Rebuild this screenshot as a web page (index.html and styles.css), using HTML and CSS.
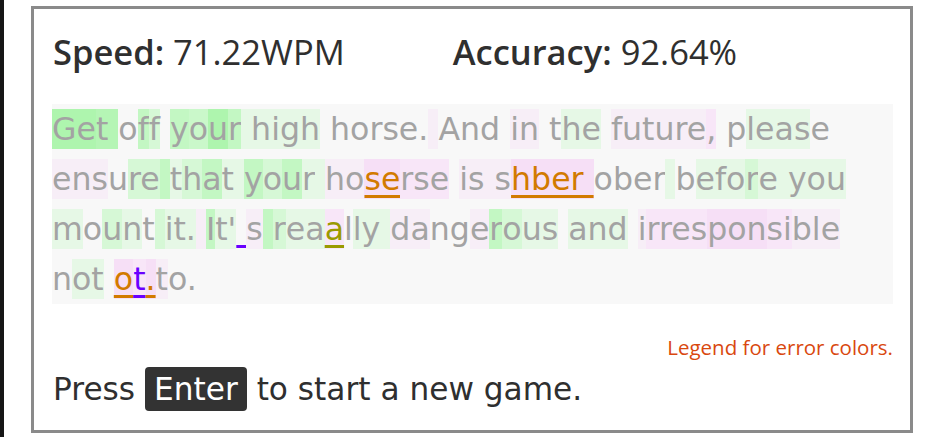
FILE: index.html
```html
<!DOCTYPE html>
<html lang="en">
<head>
<meta charset="utf-8">
<title>Typing results</title>
<link rel="stylesheet" href="styles.css">
</head>
<body>
<div class="strip"></div>
<main class="card">
  <div class="stats">
    <span class="stat"><b>Speed:</b> 71.22WPM</span>
    <span class="stat"><b>Accuracy:</b> 92.64%</span>
  </div>
  <div class="text"><span class="a">Ge</span><span class="a2">t </span>o<span class="b">f</span><span class="c">f</span> <span class="b">y</span><span class="b2">o</span><span class="a">u</span><span class="b">r</span><span class="d"> high</span> horse.<span class="p"> </span>And <span class="p">in</span> t<span class="d">he</span> <span class="p">future</span><span class="q">,</span> p<span class="d">leas</span>e<br><span class="p">ens</span>u<span class="c">re</span><span class="b"> </span><span class="d">t</span><span class="c">h</span><span class="b">a</span><span class="d">t</span><span class="d"> </span><span class="b">y</span><span class="c">o</span><span class="b">u</span><span class="d">r</span><span class="d"> </span><span class="p">ho</span><span class="r eo">se</span><span class="q">rse</span> <span class="p">is s</span><span class="r eo">hber </span>ober<span class="d"> </span>b<span class="d">efo</span><span class="c">r</span><span class="d">e you</span><br><span class="d">m</span>o<span class="c">u</span><span class="d">n</span>t<span class="c"> </span><span class="d">it.</span><span class="p"> </span><span class="b">I</span><span class="d">t'</span><span class="ev"> </span><span class="p">s</span><span class="b"> </span><span class="c">r</span><span class="d">ea</span><span class="q ey">a</span>l<span class="d">ly </span><span class="p">da</span>ng<span class="p">e</span><span class="b">r</span><span class="c">o</span><span class="d">us</span> <span class="d">and</span> <span class="p">i</span><span class="q">rres</span><span class="r">pon</span><span class="q">si</span><span class="p">ble</span><br>n<span class="d">ot</span> <span class="r eo">o</span><span class="q ev">t</span><span class="r eo">.</span><span class="p">t</span>o.</div>
  <div class="legend">Legend for error colors.</div>
  <div class="restart">Press <kbd class="key">Enter</kbd> to start a new game.</div>
</main>
</body>
</html>
```
FILE: styles.css
```css
html, body {
  margin: 0;
  padding: 0;
  background: #ffffff;
}
body {
  display: flex;
  height: 437px;
  overflow: hidden;
  font-family: "Open Sans", "Noto Sans", sans-serif;
  color: #2f2f2f;
}
.strip {
  width: 4px;
  flex: none;
  background: #161616;
}
.card {
  box-sizing: border-box;
  width: 882px;
  height: 427px;
  margin: 6px 0 0 27px;
  border: 3px solid #8a8a8a;
  padding: 0 17px 0 18px;
  display: flex;
  flex-direction: column;
}
.stats {
  display: flex;
  gap: 108px;
  margin-top: 23px;
  font-size: 34.5px;
  line-height: 40px;
  padding-left: 1px;
}
.stats b {
  font-weight: 600;
}
.text {
  margin-top: 32px;
  background: #f8f8f8;
  font-family: "DejaVu Sans", "Open Sans", sans-serif;
  font-size: 31.6px;
  line-height: 50px;
  color: #a3a3a3;
  white-space: pre;
}
.text span {
  display: inline-block;
  line-height: 40px;
  vertical-align: baseline;
}
.a { background: #aef5ae; }
.a2 { background: #b5f5b5; }
.b { background: #c3f7c3; }
.b2 { background: #caf8ca; }
.c { background: #d6f8d6; }
.d { background: #e6f8e6; }
.p { background: #f7eef7; }
.q { background: #f8e6f8; }
.r { background: #f6dff6; }
.eo, .ev, .ey {
  text-decoration-line: underline;
  text-decoration-thickness: 3px;
  text-underline-offset: 5px;
}
.eo { color: #d27a00; text-decoration-color: #d27a00; }
.ev { color: #6a00ff; text-decoration-color: #6a00ff; }
.ey { color: #9a9a00; text-decoration-color: #9a9a00; }
.legend {
  margin-top: 31px;
  text-align: right;
  font-size: 20.5px;
  line-height: 24px;
  color: #d9480f;
}
.restart {
  margin-top: 8px;
  font-family: "DejaVu Sans", "Open Sans", sans-serif;
  font-size: 31.2px;
  line-height: 44px;
  padding-left: 1px;
}
.key {
  display: inline-block;
  font-family: inherit;
  background: #333333;
  color: #ffffff;
  border-radius: 4px;
  padding: 0 9px;
  line-height: 44px;
}
```
